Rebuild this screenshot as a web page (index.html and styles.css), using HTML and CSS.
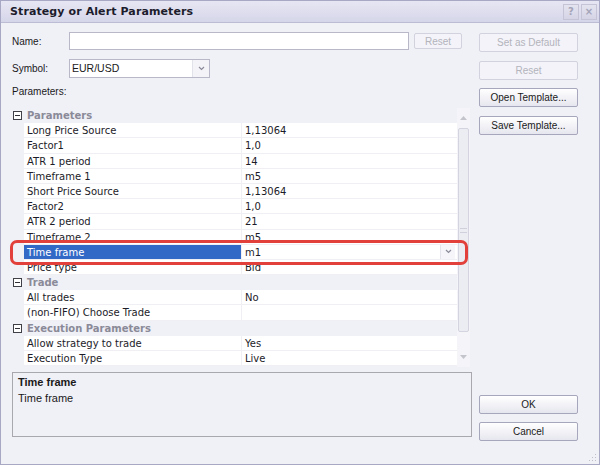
FILE: index.html
```
<!DOCTYPE html>
<html>
<head>
<meta charset="utf-8">
<link rel="stylesheet" href="styles.css">
</head>
<body>
<div class="window">
  <div class="titlebar">
    <span class="title">Strategy or Alert Parameters</span>
    <div class="tb-buttons"><span class="tb-btn">?</span><span class="tb-btn">×</span></div>
  </div>
  <div class="body">
    <div class="main">
      <div class="field-row">
        <span class="label">Name:</span>
        <div class="text-input"></div>
        <span class="btn disabled small">Reset</span>
      </div>
      <div class="field-row symbol-row">
        <span class="label">Symbol:</span>
        <div class="combo">
          <span class="combo-text">EUR/USD</span>
          <span class="combo-btn"><svg width="7" height="5" viewBox="0 0 7 5"><path d="M1 1 L3.5 3.5 L6 1" fill="none" stroke="#8a8a9a" stroke-width="1.2"/></svg></span>
        </div>
      </div>
      <div class="params-label">Parameters:</div>
      <div class="grid-wrap">
        <div class="propgrid">
          <div class="rows">
            <div class="row cat"><span class="gutter"><span class="toggle"></span></span><span class="cat-name">Parameters</span></div>
            <div class="row"><span class="gutter"></span><span class="name">Long Price Source</span><span class="value">1,13064</span></div>
            <div class="row"><span class="gutter"></span><span class="name">Factor1</span><span class="value">1,0</span></div>
            <div class="row"><span class="gutter"></span><span class="name">ATR 1 period</span><span class="value">14</span></div>
            <div class="row"><span class="gutter"></span><span class="name">Timeframe 1</span><span class="value">m5</span></div>
            <div class="row"><span class="gutter"></span><span class="name">Short Price Source</span><span class="value">1,13064</span></div>
            <div class="row"><span class="gutter"></span><span class="name">Factor2</span><span class="value">1,0</span></div>
            <div class="row"><span class="gutter"></span><span class="name">ATR 2 period</span><span class="value">21</span></div>
            <div class="row"><span class="gutter"></span><span class="name">Timeframe 2</span><span class="value">m5</span></div>
            <div class="row selected"><span class="gutter"></span><span class="name">Time frame</span><span class="value">m1<span class="cell-btn"><svg width="7" height="5" viewBox="0 0 7 5"><path d="M1 1 L3.5 3.5 L6 1" fill="none" stroke="#8a8a9a" stroke-width="1.2"/></svg></span></span></div>
            <div class="row"><span class="gutter"></span><span class="name">Price type</span><span class="value">Bid</span></div>
            <div class="row cat"><span class="gutter"><span class="toggle"></span></span><span class="cat-name">Trade</span></div>
            <div class="row"><span class="gutter"></span><span class="name">All trades</span><span class="value">No</span></div>
            <div class="row"><span class="gutter"></span><span class="name">(non-FIFO) Choose Trade</span><span class="value"></span></div>
            <div class="row cat"><span class="gutter"><span class="toggle"></span></span><span class="cat-name">Execution Parameters</span></div>
            <div class="row"><span class="gutter"></span><span class="name">Allow strategy to trade</span><span class="value">Yes</span></div>
            <div class="row"><span class="gutter"></span><span class="name">Execution Type</span><span class="value">Live</span></div>
          </div>
          <div class="scrollbar">
            <span class="arrow"><svg width="7" height="4" viewBox="0 0 7 4"><path d="M0 4 L3.5 0 L7 4 Z" fill="#c4c4cc"/></svg></span>
            <div class="track">
              <div class="thumb"><span class="grip"></span></div>
            </div>
            <span class="arrow"><svg width="7" height="4" viewBox="0 0 7 4"><path d="M0 0 L3.5 4 L7 0 Z" fill="#c4c4cc"/></svg></span>
          </div>
        </div>
        <div class="highlight"></div>
      </div>
      <div class="desc">
        <div class="desc-title">Time frame</div>
        <div class="desc-text">Time frame</div>
      </div>
    </div>
    <div class="side">
      <span class="btn disabled">Set as Default</span>
      <span class="btn disabled">Reset</span>
      <span class="btn">Open Template...</span>
      <span class="btn">Save Template...</span>
      <span class="btn ok">OK</span>
      <span class="btn">Cancel</span>
    </div>
  </div>
  <svg class="grip-corner" width="8" height="8" viewBox="0 0 8 8"><g fill="#c0c0cc"><rect x="6" y="0" width="1" height="1"/><rect x="3" y="3" width="1" height="1"/><rect x="6" y="3" width="1" height="1"/><rect x="0" y="6" width="1" height="1"/><rect x="3" y="6" width="1" height="1"/><rect x="6" y="6" width="1" height="1"/></g></svg>
</div>
</body>
</html>
```
FILE: styles.css
```
* { box-sizing: border-box; }
html, body { margin: 0; padding: 0; background: #f0f0f7; }
body { width: 600px; height: 465px; overflow: hidden; }

.window {
  position: relative;
  width: 600px;
  height: 465px;
  border: 1px solid #a8a8c4;
  background: #f0f0f7;
  display: flex;
  flex-direction: column;
  font-family: "Liberation Sans", Arial, sans-serif;
  font-size: 10px;
  color: #1a1a1a;
}

.titlebar {
  height: 22px;
  flex: none;
  display: flex;
  align-items: center;
  justify-content: space-between;
  padding: 0 2px 0 9px;
  background: linear-gradient(#e6e6f3, #d6d6ea);
  border-bottom: 1px solid #bcbcd4;
}
.title {
  font-family: "DejaVu Sans", Verdana, sans-serif;
  font-weight: bold;
  font-size: 11px;
  color: #1c1c2c;
  letter-spacing: 0.1px;
}
.tb-buttons { display: flex; gap: 2px; }
.tb-btn {
  width: 16px;
  height: 16px;
  border: 1px solid #c4c4d6;
  background: linear-gradient(#e4e4f0, #d4d4e6);
  color: #a4a4b8;
  font-family: "DejaVu Sans", sans-serif;
  font-size: 10px;
  font-weight: bold;
  display: flex;
  align-items: center;
  justify-content: center;
}

.body {
  flex: 1;
  display: flex;
  gap: 7px;
  padding-left: 11px;
}

.main {
  width: 460px;
  display: flex;
  flex-direction: column;
  padding-top: 9px;
}

.field-row {
  display: flex;
  align-items: center;
  height: 18px;
}
.symbol-row { margin-top: 9px; }
.label { width: 57px; }
.text-input {
  width: 340px;
  height: 18px;
  background: #fff;
  border: 1px solid #b8b8c8;
}
.btn {
  height: 19px;
  display: flex;
  align-items: center;
  justify-content: center;
  border: 1px solid #a6a6bc;
  border-radius: 2px;
  background: linear-gradient(#ffffff, #e6e6ef);
  color: #1a1a1a;
  font-size: 10px;
}
.btn.disabled {
  border-color: #d2d2de;
  background: #f3f3f9;
  color: #b4b4bc;
}
.btn.small {
  width: 48px;
  height: 16px;
  margin-left: 5px;
}

.combo {
  width: 141px;
  height: 19px;
  background: #fff;
  border: 1px solid #b8b8c8;
  display: flex;
  align-items: center;
  justify-content: space-between;
}
.combo-text { padding-left: 2px; font-size: 10.5px; }
.combo-btn {
  width: 17px;
  height: 17px;
  border-left: 1px solid #e2e2ea;
  background: #f4f4f8;
  display: flex;
  align-items: center;
  justify-content: center;
}

.params-label {
  margin-top: 8px;
  height: 14px;
  line-height: 14px;
}

.grid-wrap {
  position: relative;
  margin-top: 8px;
  margin-left: -2px;
  width: 460px;
  height: 260px;
}
.propgrid {
  display: flex;
  height: 260px;
  padding-top: 1px;
  font-family: "DejaVu Sans", Verdana, sans-serif;
  font-size: 10px;
  color: #1c1c28;
}
.rows { width: 447px; }
.row {
  display: flex;
  height: 15.2px;
  line-height: 15px;
}
.gutter {
  width: 14px;
  flex: none;
  display: flex;
  align-items: center;
  justify-content: center;
  padding-left: 1px;
}
.name {
  width: 218px;
  flex: none;
  padding-left: 3px;
  background: #fff;
  border-bottom: 1px solid #efeff4;
  border-right: 1px solid #efeff4;
  white-space: nowrap;
  overflow: hidden;
}
.value {
  flex: 1;
  padding-left: 3px;
  background: #fff;
  border-bottom: 1px solid #efeff4;
  position: relative;
}
.row.cat { background: #f0f0f7; }
.cat-name {
  font-weight: bold;
  color: #8a8a98;
  padding-left: 3px;
}
.toggle {
  position: relative;
  width: 9px;
  height: 9px;
  border: 1px solid #404048;
  background: #fff;
}
.toggle::after {
  content: "";
  position: absolute;
  left: 1px;
  top: 3px;
  width: 5px;
  height: 1px;
  background: #303038;
}
.row.selected .name {
  background: #3369c6;
  color: #fff;
}
.cell-btn {
  position: absolute;
  right: 2px;
  top: 0;
  width: 15px;
  height: 14px;
  border-left: 1px solid #e4e4ec;
  background: #f6f6fa;
  display: flex;
  align-items: center;
  justify-content: center;
}

.scrollbar {
  width: 13px;
  display: flex;
  flex-direction: column;
  background: #f4f4f9;
}
.arrow {
  height: 20px;
  display: flex;
  align-items: center;
  justify-content: center;
}
.track {
  flex: 1;
  padding: 0 1px;
}
.thumb {
  height: 204px;
  border: 1px solid #d4d4e0;
  border-radius: 2px;
  background: #ececf3;
  display: flex;
  align-items: center;
  justify-content: center;
}
.grip {
  width: 7px;
  height: 5px;
  border-top: 1px solid #d0d0dc;
  border-bottom: 1px solid #d0d0dc;
}

.highlight {
  position: absolute;
  left: 0;
  top: 133px;
  width: 458px;
  height: 25px;
  border: 3px solid #e2403a;
  border-radius: 7px;
}

.desc {
  margin-top: 5px;
  height: 65px;
  border: 1px solid #a8a8ae;
  padding: 1px 5px;
  font-size: 11px;
  color: #1a1a1a;
}
.desc-title { font-weight: bold; height: 16px; line-height: 16px; }
.desc-text { height: 16px; line-height: 16px; }

.side {
  width: 99px;
  display: flex;
  flex-direction: column;
  padding-top: 10px;
  padding-bottom: 23px;
}
.side .btn + .btn { margin-top: 9px; }
.side .btn:nth-child(3) { margin-top: 8px; }
.side .btn.ok { margin-top: auto; }
.side .btn:last-child { margin-top: 8px; }

.grip-corner {
  position: absolute;
  right: 2px;
  bottom: 2px;
}
```
